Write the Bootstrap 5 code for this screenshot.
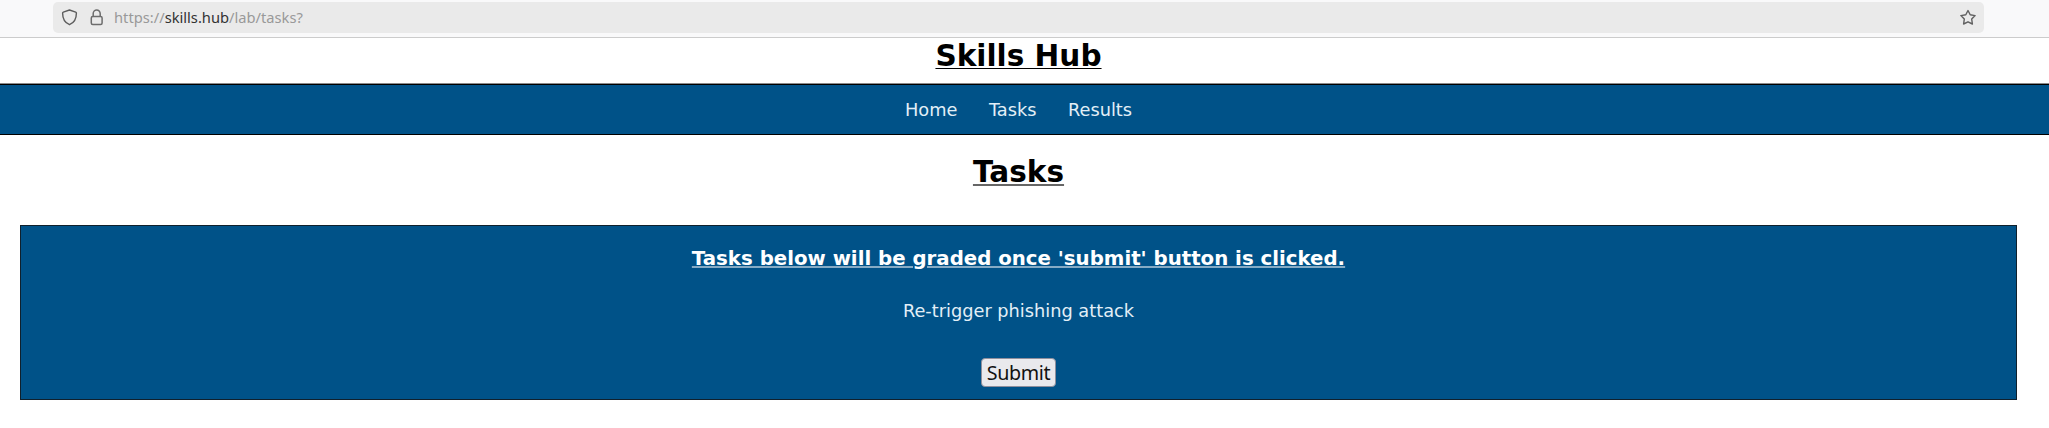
<!DOCTYPE html>
<html lang="en">
<head>
<meta charset="utf-8">
<meta name="viewport" content="width=device-width, initial-scale=1">
<title>Skills Hub</title>
<link href="https://cdn.jsdelivr.net/npm/bootstrap@5.3.0/dist/css/bootstrap.min.css" rel="stylesheet">
<style>
  body { font-family: "DejaVu Sans", sans-serif; font-size: 17.76px; line-height: 24px; color: #000; background: #fff; overflow: hidden; }
  .toolbar { height: 38px; background: #f9f9fa; border-bottom: 1px solid #ccc; padding: 2px 65px 4px 53px; }
  .address { height: 31px; background: #eaeaea; border-radius: 5px; padding: 0 8px; color: #666; }
  .url { font: 14.7px/31px "Noto Sans", sans-serif; color: #999; margin-left: 7px; white-space: nowrap; }
  .url b { font-weight: 400; color: #333; }
  .page-title { font-size: 29.55px; line-height: 34px; font-weight: 700; text-decoration: underline; text-decoration-thickness: 1px; text-underline-offset: 2px; }
  .section-title { text-decoration-thickness: 2px; text-decoration-color: #666; text-underline-offset: 2px; }
  .gutter { padding-right: 12px; }
  .site-header { height: 46px; padding-top: 1px; border-bottom: 1px solid #8b8b8b; }
  .site-nav { height: 51px; background: #005288; border: 1px solid #000; border-width: 1px 0; gap: 31.5px; }
  .site-nav a { color: #e3eff7; text-decoration: none; }
  .heading-area { padding-top: 20px; height: 90px; }
  .task-panel { height: 175px; margin: 0 32px 0 20px; background: #005288; border: 1px solid #10202c; color: #e3eff7; padding-top: 21px; }
  .task-panel h2 { font-size: 19.76px; line-height: 24px; font-weight: 700; color: #fff; text-decoration: underline; text-decoration-color: #86abc5; text-decoration-thickness: 2px; text-underline-offset: 1px; margin: 0 0 28px; }
  .task-panel p { margin: 0 0 35px; }
  .submit-btn { width: 75px; height: 29px; padding: 0; font: 19.7px/26px "Noto Sans", sans-serif; letter-spacing: -.35px; background: #e9e9ed; border: 1px solid #8f8f9d; border-radius: 4px; color: #111; }
</style>
</head>
<body>
<div class="toolbar">
  <div class="address d-flex align-items-center">
    <svg width="17" height="17" viewBox="0 0 17 17" fill="none" stroke="#5d5d5d" stroke-width="1.4" stroke-linejoin="round"><path d="M8.5 1 2.3 3.1Q1.6 3.4 1.6 4.1C1.6 9.7 3.7 13.9 8.5 15.7 13.3 13.9 15.4 9.7 15.4 4.1Q15.4 3.4 14.7 3.1Z"/></svg>
    <svg class="ms-2" width="21" height="17" viewBox="0 0 21 17" fill="none" stroke="#6d6d6d" stroke-width="1.5"><rect x="5.3" y="7.4" width="10.8" height="8.2" rx="1.5"/><path d="M7.2 7.3V4.5a3.5 3.5 0 0 1 7 0v2.8"/></svg>
    <span class="url">https://<b>skills.hub</b>/lab/tasks?</span>
    <svg class="ms-auto" width="16" height="17" viewBox="0 0 16 17" fill="none" stroke="#606060" stroke-width="1.4" stroke-linejoin="round"><path d="m8 1.5 2.2 4.3 4.9.8-3.4 3.5.7 4.9L8 12.8 3.6 15l.7-4.9L.9 6.6l4.9-.8Z"/></svg>
  </div>
</div>
<header class="site-header gutter text-center"><h1 class="page-title m-0">Skills Hub</h1></header>
<nav class="site-nav gutter d-flex align-items-center justify-content-center">
  <a href="#">Home</a><a href="#">Tasks</a><a href="#">Results</a>
</nav>
<main>
  <div class="heading-area gutter text-center"><h1 class="page-title section-title m-0">Tasks</h1></div>
  <section class="task-panel text-center">
    <h2>Tasks below will be graded once 'submit' button is clicked.</h2>
    <p>Re-trigger phishing attack</p>
    <button class="submit-btn d-block mx-auto" type="button">Submit</button>
  </section>
</main>
<script src="https://cdn.jsdelivr.net/npm/bootstrap@5.3.0/dist/js/bootstrap.bundle.min.js"></script>
</body>
</html>
